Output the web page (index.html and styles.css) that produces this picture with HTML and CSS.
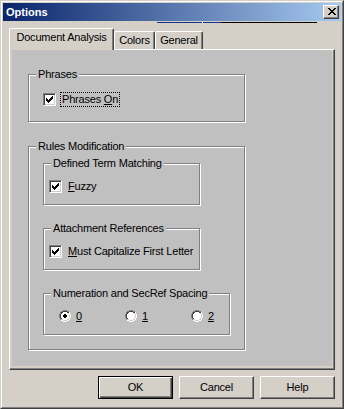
FILE: index.html
```html
<!DOCTYPE html>
<html>
<head>
<meta charset="utf-8">
<title>Options</title>
<link rel="stylesheet" href="styles.css">
</head>
<body>
<div class="window">
  <div class="frame">
    <div class="titlebar">
      <span class="title">Options</span>
      <span class="close"><svg width="8" height="7" viewBox="0 0 8 7" shape-rendering="crispEdges"><path fill="#000" d="M0 0h2v1H0zM6 0h2v1H6zM1 1h2v1H1zM5 1h2v1H5zM2 2h4v1H2zM3 3h2v1H3zM2 4h4v1H2zM1 5h2v1H1zM5 5h2v1H5zM0 6h2v1H0zM6 6h2v1H6z"/></svg></span>
    </div>
    <div class="glitch"><span class="gb g1"></span><span class="gw"></span><span class="gb g2"></span><span class="gk"></span></div>
    <div class="body">
      <div class="tabs">
        <div class="tab active">Document Analysis</div>
        <div class="tab t-colors">Colors</div>
        <div class="tab t-general">General</div>
      </div>
      <div class="panel">
        <div class="page">
          <fieldset class="group g-phrases">
            <legend>Phrases</legend>
            <div class="check">
              <span class="cb"><svg width="7" height="7" viewBox="0 0 7 7" shape-rendering="crispEdges"><path fill="#000" d="M6 0h1v1H6zM5 1h2v1H5zM0 2h1v1H0zM4 2h3v1H4zM0 3h2v1H0zM3 3h3v1H3zM0 4h5v1H0zM1 5h3v1H1zM2 6h1v1H2z"/></svg></span>
              <span class="lbl focus">Phrases <u>O</u>n</span>
            </div>
          </fieldset>
          <fieldset class="group g-rules">
            <legend>Rules Modification</legend>
            <fieldset class="group g-inner">
              <legend>Defined Term Matching</legend>
              <div class="check">
                <span class="cb"><svg width="7" height="7" viewBox="0 0 7 7" shape-rendering="crispEdges"><path fill="#000" d="M6 0h1v1H6zM5 1h2v1H5zM0 2h1v1H0zM4 2h3v1H4zM0 3h2v1H0zM3 3h3v1H3zM0 4h5v1H0zM1 5h3v1H1zM2 6h1v1H2z"/></svg></span>
                <span class="lbl"><u>F</u>uzzy</span>
              </div>
            </fieldset>
            <fieldset class="group g-inner">
              <legend>Attachment References</legend>
              <div class="check">
                <span class="cb"><svg width="7" height="7" viewBox="0 0 7 7" shape-rendering="crispEdges"><path fill="#000" d="M6 0h1v1H6zM5 1h2v1H5zM0 2h1v1H0zM4 2h3v1H4zM0 3h2v1H0zM3 3h3v1H3zM0 4h5v1H0zM1 5h3v1H1zM2 6h1v1H2z"/></svg></span>
                <span class="lbl"><u>M</u>ust Capitalize First Letter</span>
              </div>
            </fieldset>
            <fieldset class="group g-inner g-num">
              <legend>Numeration and SecRef Spacing</legend>
              <div class="radios">
                <span class="radio"><svg width="12" height="12" viewBox="0 0 12 12" shape-rendering="crispEdges"><path fill="#808080" d="M4 0h4v1H4zM2 1h2v1H2zM8 1h2v1H8zM1 2h1v2H1zM0 4h1v4H0zM1 8h1v2H1z"/><path fill="#fff" d="M10 2h1v2h-1zM11 4h1v4h-1zM10 8h1v2h-1zM2 10h2v1H2zM8 10h2v1H8zM4 11h4v1H4zM4 2h4v1H4zM3 3h6v1H3zM2 4h8v4H2zM3 8h6v1H3zM4 9h4v1H4z"/><path fill="#404040" d="M4 1h4v1H4zM2 2h2v1H2zM8 2h2v1H8zM2 3h1v1H2zM1 4h1v4H1zM2 8h1v1H2z"/><path fill="#d4d0c8" d="M9 3h1v1H9zM10 4h1v4h-1zM9 8h1v1H9zM2 9h2v1H2zM8 9h2v1H8zM4 10h4v1H4z"/><path fill="#000" d="M5 4h2v1H5zM4 5h4v2H4zM5 7h2v1H5z"/></svg><u>0</u></span>
                <span class="radio"><svg width="12" height="12" viewBox="0 0 12 12" shape-rendering="crispEdges"><path fill="#808080" d="M4 0h4v1H4zM2 1h2v1H2zM8 1h2v1H8zM1 2h1v2H1zM0 4h1v4H0zM1 8h1v2H1z"/><path fill="#fff" d="M10 2h1v2h-1zM11 4h1v4h-1zM10 8h1v2h-1zM2 10h2v1H2zM8 10h2v1H8zM4 11h4v1H4zM4 2h4v1H4zM3 3h6v1H3zM2 4h8v4H2zM3 8h6v1H3zM4 9h4v1H4z"/><path fill="#404040" d="M4 1h4v1H4zM2 2h2v1H2zM8 2h2v1H8zM2 3h1v1H2zM1 4h1v4H1zM2 8h1v1H2z"/><path fill="#d4d0c8" d="M9 3h1v1H9zM10 4h1v4h-1zM9 8h1v1H9zM2 9h2v1H2zM8 9h2v1H8zM4 10h4v1H4z"/></svg><u>1</u></span>
                <span class="radio last"><svg width="12" height="12" viewBox="0 0 12 12" shape-rendering="crispEdges"><path fill="#808080" d="M4 0h4v1H4zM2 1h2v1H2zM8 1h2v1H8zM1 2h1v2H1zM0 4h1v4H0zM1 8h1v2H1z"/><path fill="#fff" d="M10 2h1v2h-1zM11 4h1v4h-1zM10 8h1v2h-1zM2 10h2v1H2zM8 10h2v1H8zM4 11h4v1H4zM4 2h4v1H4zM3 3h6v1H3zM2 4h8v4H2zM3 8h6v1H3zM4 9h4v1H4z"/><path fill="#404040" d="M4 1h4v1H4zM2 2h2v1H2zM8 2h2v1H8zM2 3h1v1H2zM1 4h1v4H1zM2 8h1v1H2z"/><path fill="#d4d0c8" d="M9 3h1v1H9zM10 4h1v4h-1zM9 8h1v1H9zM2 9h2v1H2zM8 9h2v1H8zM4 10h4v1H4z"/></svg><u>2</u></span>
              </div>
            </fieldset>
          </fieldset>
        </div>
      </div>
      <div class="buttons">
        <button class="btn default">OK</button>
        <button class="btn">Cancel</button>
        <button class="btn">Help</button>
      </div>
    </div>
  </div>
</div>
</body>
</html>
```
FILE: styles.css
```css
* { box-sizing: border-box; }
html, body { margin: 0; padding: 0; }
body {
  font-family: "Liberation Sans", Arial, sans-serif;
  font-size: 11px;
  line-height: 13px;
  color: #000;
  letter-spacing: -0.2px;
  background: #d4d0c8;
}
u { text-decoration: underline; text-underline-offset: 1px; }

.window {
  width: 344px;
  height: 409px;
  border: 1px solid;
  border-color: #d4d0c8 #404040 #404040 #d4d0c8;
  background: #d4d0c8;
}
.frame {
  height: 100%;
  border: 1px solid;
  border-color: #fff #808080 #808080 #fff;
  padding: 1px;
  display: flex;
  flex-direction: column;
}

.titlebar {
  height: 18px;
  flex: none;
  display: flex;
  align-items: center;
  padding-left: 3px;
  background: linear-gradient(to right, #0a246a, #a6caf0);
}
.title { color: #fff; font-weight: bold; letter-spacing: 0; }
.close {
  margin-left: auto;
  margin-right: 2px;
  width: 16px;
  height: 14px;
  border: 1px solid;
  border-color: #fff #404040 #404040 #fff;
  box-shadow: inset -1px -1px 0 #808080;
  background: #d4d0c8;
  padding: 2px 0 0 4px;
}
.close svg { display: block; }

.glitch {
  height: 7px;
  flex: none;
  display: flex;
  align-items: flex-start;
  padding: 1px 0 0 154px;
}
.glitch span { height: 1px; display: block; }
.gb { background: #14338a; }
.g1 { width: 45px; }
.g2 { width: 18px; }
.gw { width: 1px; background: #fff; }
.gk { width: 96px; background: #000; }

.body { padding: 0 6px; flex: 1; display: flex; flex-direction: column; }

.tabs { height: 21px; display: flex; align-items: flex-end; }
.tab {
  height: 18px;
  border-top: 1px solid #fff;
  border-left: 1px solid #fff;
  border-right: 1px solid #404040;
  box-shadow: inset -1px 0 0 #808080;
  border-radius: 2px 2px 0 0;
  background: #d4d0c8;
  padding-top: 2px;
  text-align: center;
  white-space: nowrap;
}
.tab.active {
  width: 105px;
  height: 22px;
  margin-bottom: -1px;
  padding-top: 2px;
  position: relative;
  z-index: 1;
}
.t-colors { width: 41px; }
.t-general { width: 48px; }

.panel {
  height: 321px;
  border: 1px solid;
  border-color: #fff #404040 #404040 #fff;
  box-shadow: inset -1px -1px 0 #808080;
  padding: 0 2px 3px 2px;
}
.page {
  height: 100%;
  background: #c0c0c0;
  overflow: hidden;
  padding-top: 1px;
}

.group {
  margin: 0;
  padding: 0;
  min-width: 0;
  border: 1px solid #808080;
  box-shadow: inset 1px 1px 0 #fff, 1px 1px 0 #fff;
}
.group > legend {
  margin-left: 7px;
  padding: 0 2px;
  line-height: 13px;
  background: #c0c0c0;
}
.g-phrases { width: 217px; margin: 17px 0 0 16px; padding: 11px 0 14px 0; }
.g-phrases .check { margin-left: 14px; }
.g-rules { width: 217px; margin: 18px 0 0 16px; padding: 4px 0 14px 0; }
.g-inner { width: 157px; margin-left: 14px; padding: 9px 0 10px 0; }
.g-inner .check { margin-left: 5px; }
.g-inner + .g-inner { margin-top: 17px; }
.g-num { width: 187px; padding: 9px 0 11px 0; }

.check { display: flex; align-items: center; height: 15px; }
.cb {
  flex: none;
  width: 13px;
  height: 13px;
  border: 1px solid;
  border-color: #808080 #fff #fff #808080;
  box-shadow: inset 1px 1px 0 #404040, inset -1px -1px 0 #d4d0c8;
  background: #fff;
}
.cb svg { display: block; margin: 2px; }
.lbl {
  margin-left: 4px;
  padding: 0 1px;
  border: 1px solid transparent;
  line-height: 13px;
  white-space: nowrap;
}
.lbl.focus { border: 1px dotted #000; }

.radios { display: flex; height: 14px; align-items: center; margin-left: 15px; }
.radio { flex: none; width: 66px; display: flex; align-items: center; }
.radio.last { width: auto; }
.radio svg { display: block; margin-right: 5px; flex: none; }

.buttons {
  margin-top: 6px;
  display: flex;
  justify-content: flex-end;
  gap: 6px;
}
.btn {
  width: 75px;
  height: 23px;
  margin: 0;
  padding: 0;
  font: inherit;
  color: #000;
  letter-spacing: inherit;
  background: #d4d0c8;
  border: 1px solid;
  border-color: #fff #404040 #404040 #fff;
  box-shadow: inset -1px -1px 0 #808080;
  border-radius: 0;
}
.btn.default {
  border-color: #000;
  box-shadow: inset 1px 1px 0 #fff, inset -1px -1px 0 #404040, inset -2px -2px 0 #808080;
}
```
